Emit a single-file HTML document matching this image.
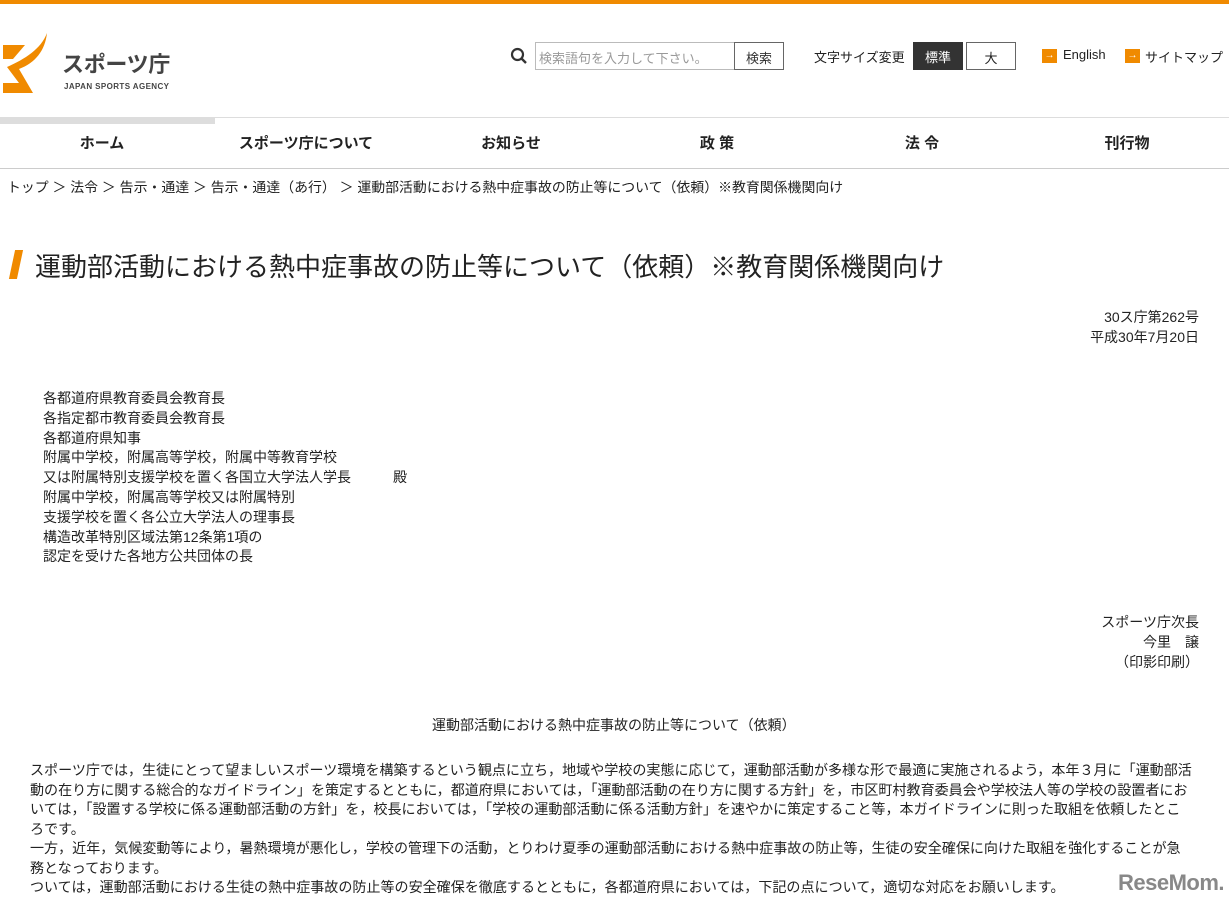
<!DOCTYPE html>
<html><head><meta charset="utf-8">
<style>
*{margin:0;padding:0;box-sizing:border-box}
body{width:1229px;height:906px;overflow:hidden;background:#fff;font-family:"Liberation Sans","Noto Sans CJK JP",sans-serif;color:#222;font-size:14px;position:relative}
.top{height:4px;background:#f08a00}
.abs{position:absolute;white-space:nowrap}
.nav{position:absolute;top:117px;left:0;width:1229px;height:52px;border-top:1px solid #ddd;border-bottom:1px solid #ccc}
.nav .act{position:absolute;left:0;top:0;width:215px;height:6px;background:#ddd}
.nav span{position:absolute;top:14px;font-weight:bold;font-size:15px;transform:translateX(-50%)}
.p{position:absolute;left:30px;width:1164px;line-height:19.5px;font-size:14.05px}
</style></head><body>
<div class="top"></div>
<svg class="abs" style="left:3px;top:33px" width="46" height="60" viewBox="0 0 46 60">
<path d="M44 0 C42 18 32 30 16 36 L30 60 L0 60 L0 50 L16 50 L4 34 C22 26 38 16 44 0Z" fill="#f08a00"/>
<path d="M0 12 L22 12 L10 26 L0 26Z" fill="#f08a00"/>
</svg>
<div class="abs" style="left:62px;top:47px;font-size:22px;font-weight:bold;color:#444;letter-spacing:-0.3px">スポーツ庁</div>
<div class="abs" style="left:64px;top:82px;font-size:8px;font-weight:bold;color:#444;letter-spacing:0.4px">JAPAN SPORTS AGENCY</div>

<svg class="abs" style="left:510px;top:47px" width="18" height="18" viewBox="0 0 18 18"><circle cx="7.5" cy="7.5" r="5.5" fill="none" stroke="#333" stroke-width="2.2"/><path d="M11.5 11.5 L16 16" stroke="#333" stroke-width="2.4"/></svg>
<div class="abs" style="left:535px;top:42px;width:200px;height:28px;border:1px solid #bbb;font-size:13px;color:#999;padding:5px 3px">検索語句を入力して下さい。</div>
<div class="abs" style="left:734px;top:42px;width:50px;height:28px;border:1px solid #666;font-size:13px;color:#333;text-align:center;padding-top:5px">検索</div>
<div class="abs" style="left:814px;top:47px;font-size:13px">文字サイズ変更</div>
<div class="abs" style="left:913px;top:42px;width:50px;height:28px;background:#333;color:#fff;text-align:center;padding-top:5px;font-size:13px">標準</div>
<div class="abs" style="left:966px;top:42px;width:50px;height:28px;border:1px solid #666;text-align:center;padding-top:5px;font-size:13px">大</div>
<div class="abs" style="left:1042px;top:49px;width:15px;height:14px;background:#f08a00;color:#fff;font-size:10px;text-align:center;line-height:14px">→</div>
<div class="abs" style="left:1063px;top:47px;font-size:13px">English</div>
<div class="abs" style="left:1125px;top:49px;width:15px;height:14px;background:#f08a00;color:#fff;font-size:10px;text-align:center;line-height:14px">→</div>
<div class="abs" style="left:1145px;top:47px;font-size:13px">サイトマップ</div>

<div class="nav"><div class="act"></div>
<span style="left:102px">ホーム</span><span style="left:306px">スポーツ庁について</span><span style="left:511px">お知らせ</span><span style="left:717px">政 策</span><span style="left:922px">法 令</span><span style="left:1127px">刊行物</span></div>

<div class="abs" style="left:7px;top:177px;font-size:13.9px">トップ ＞ 法令 ＞ 告示・通達 ＞ 告示・通達（あ行） ＞ 運動部活動における熱中症事故の防止等について（依頼）※教育関係機関向け</div>

<div class="abs" style="left:12px;top:250px;width:8px;height:29px;background:#f08a00;transform:skewX(-12deg)"></div>
<div class="abs" style="left:35px;top:247px;font-size:26px;color:#222">運動部活動における熱中症事故の防止等について（依頼）※教育関係機関向け</div>

<div class="abs" style="right:30px;top:307px;text-align:right;line-height:20px;font-size:14px">30ス庁第262号<br>平成30年7月20日</div>

<div class="abs" style="left:43px;top:389px;line-height:19.8px;font-size:14px">各都道府県教育委員会教育長<br>各指定都市教育委員会教育長<br>各都道府県知事<br>附属中学校，附属高等学校，附属中等教育学校<br>又は附属特別支援学校を置く各国立大学法人学長　　　殿<br>附属中学校，附属高等学校又は附属特別<br>支援学校を置く各公立大学法人の理事長<br>構造改革特別区域法第12条第1項の<br>認定を受けた各地方公共団体の長</div>

<div class="abs" style="right:30px;top:612px;text-align:right;line-height:20px;font-size:14px">スポーツ庁次長<br>今里　譲<br>（印影印刷）</div>

<div class="abs" style="left:432px;top:715px;font-size:14px">運動部活動における熱中症事故の防止等について（依頼）</div>

<div class="p" style="top:761px">スポーツ庁では，生徒にとって望ましいスポーツ環境を構築するという観点に立ち，地域や学校の実態に応じて，運動部活動が多様な形で最適に実施されるよう，本年３月に「運動部活動の在り方に関する総合的なガイドライン」を策定するとともに，都道府県においては，「運動部活動の在り方に関する方針」を，市区町村教育委員会や学校法人等の学校の設置者においては，「設置する学校に係る運動部活動の方針」を，校長においては，「学校の運動部活動に係る活動方針」を速やかに策定すること等，本ガイドラインに則った取組を依頼したところです。<br>一方，近年，気候変動等により，暑熱環境が悪化し，学校の管理下の活動，とりわけ夏季の運動部活動における熱中症事故の防止等，生徒の安全確保に向けた取組を強化することが急務となっております。<br>ついては，運動部活動における生徒の熱中症事故の防止等の安全確保を徹底するとともに，各都道府県においては，下記の点について，適切な対応をお願いします。</div>

<div class="abs" style="left:1118px;top:870px;font-size:22px;font-weight:bold;color:#888;letter-spacing:-0.5px">ReseMom.</div>
</body></html>
